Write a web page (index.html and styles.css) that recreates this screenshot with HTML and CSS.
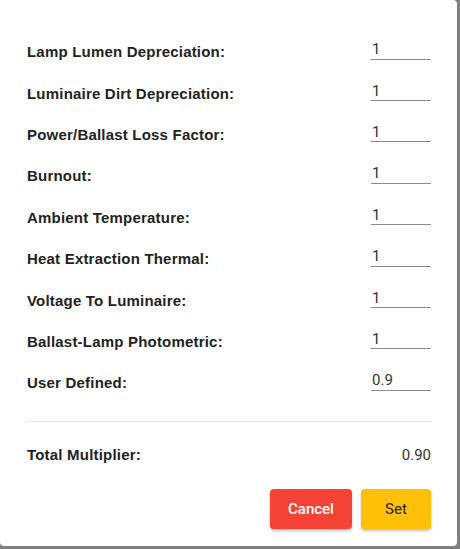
FILE: index.html
```html
<!DOCTYPE html>
<html lang="en">
<head>
    <meta charset="UTF-8">
    <meta name="viewport" content="width=device-width, initial-scale=1.0">
    <title>Light Loss Factors</title>
    <link rel="stylesheet" href="styles.css">
</head>
<body>

    <!-- Loss factor dialog -->
    <div class="dialog">
        <div class="factors">
            <div class="row">
                <label>Lamp Lumen Depreciation:</label>
                <input type="text" value="1">
            </div>
            <div class="row">
                <label>Luminaire Dirt Depreciation:</label>
                <input type="text" value="1">
            </div>
            <div class="row">
                <label>Power/Ballast Loss Factor:</label>
                <input type="text" value="1">
            </div>
            <div class="row">
                <label>Burnout:</label>
                <input type="text" value="1">
            </div>
            <div class="row">
                <label>Ambient Temperature:</label>
                <input type="text" value="1">
            </div>
            <div class="row">
                <label>Heat Extraction Thermal:</label>
                <input type="text" value="1">
            </div>
            <div class="row">
                <label>Voltage To Luminaire:</label>
                <input type="text" value="1">
            </div>
            <div class="row">
                <label>Ballast-Lamp Photometric:</label>
                <input type="text" value="1">
            </div>
            <div class="row">
                <label>User Defined:</label>
                <input type="text" value="0.9">
            </div>
        </div>

        <hr class="divider">

        <div class="total">
            <span class="total-label">Total Multiplier:</span>
            <span class="total-value">0.90</span>
        </div>

        <div class="actions">
            <button class="btn cancel">Cancel</button>
            <button class="btn set">Set</button>
        </div>
    </div>

</body>
</html>
```

FILE: styles.css
```css
body {
    margin: 0;
    padding: 0;
    background-color: #7f7f7f;
    font-family: "Liberation Sans", Arial, sans-serif;
    height: 549px;
    overflow: hidden;
}

.dialog {
    width: 457px;
    height: 546px;
    box-sizing: border-box;
    background: #ffffff;
    border-radius: 0 4px 4px 4px;
    padding: 31px 26px 17px 27px;
    display: flex;
    flex-direction: column;
}

.row {
    height: 41.4px;
    display: flex;
    align-items: center;
    justify-content: space-between;
}

.row label,
.total-label {
    font-family: "Liberation Sans", Arial, sans-serif;
    font-size: 15px;
    font-weight: bold;
    letter-spacing: 0.2px;
    color: #222222;
}

.row input {
    width: 60px;
    height: 20px;
    box-sizing: border-box;
    margin-bottom: 4px;
    padding: 0 0 0 1px;
    border: none;
    border-bottom: 1px solid #8c8c8c;
    outline: none;
    font-family: Roboto, sans-serif;
    font-size: 15px;
    color: #333333;
    background: transparent;
}

.divider {
    border: none;
    border-top: 1px solid #e6e6e6;
    margin: 17px 0 0 0;
}

.total {
    display: flex;
    justify-content: space-between;
    align-items: center;
    height: 34px;
    margin-top: 16px;
}

.total-value {
    font-family: Roboto, sans-serif;
    font-size: 15px;
    color: #333333;
}

.actions {
    display: flex;
    justify-content: flex-end;
    gap: 9px;
    margin-top: auto;
}

.btn {
    height: 40px;
    border: none;
    border-radius: 4px;
    font-family: Roboto, sans-serif;
    font-size: 15px;
    font-weight: 500;
    cursor: pointer;
    box-shadow: 0 2px 3px rgba(0, 0, 0, 0.25);
}

.btn.cancel {
    width: 82px;
    background: #f44336;
    color: #ffffff;
}

.btn.set {
    width: 70px;
    background: #ffc107;
    color: #222222;
    font-weight: 400;
}
```
